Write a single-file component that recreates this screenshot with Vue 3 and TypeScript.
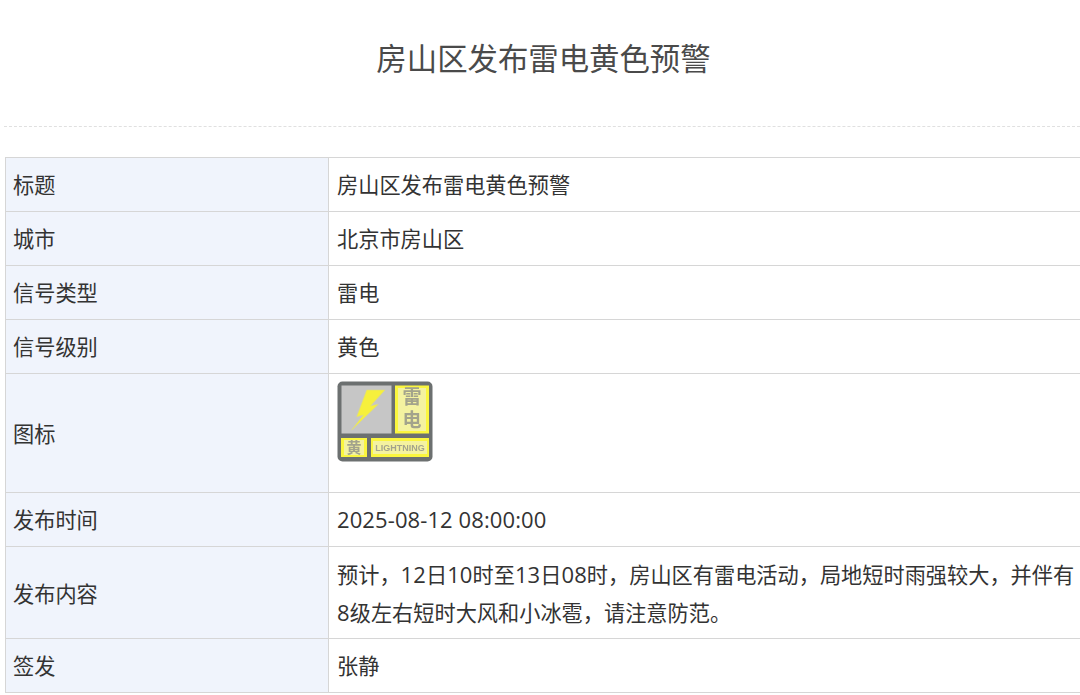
<script setup lang="ts">
interface Part { text: string; num: boolean }
interface Row { label: string; lines?: Part[][]; icon?: boolean; cls?: string }

function parts(text: string): Part[] {
  return text
    .split(/(\d[\d\-: ]*\d|\d)/)
    .filter((s) => s.length > 0)
    .map((s) => ({ text: s, num: /^\d/.test(s) }))
}

const rows: Row[] = [
  { label: '标题', lines: [parts('房山区发布雷电黄色预警')] },
  { label: '城市', lines: [parts('北京市房山区')] },
  { label: '信号类型', lines: [parts('雷电')] },
  { label: '信号级别', lines: [parts('黄色')] },
  { label: '图标', icon: true, cls: 'icon-row' },
  { label: '发布时间', lines: [parts('2025-08-12 08:00:00')] },
  {
    label: '发布内容',
    lines: [
      parts('预计，12日10时至13日08时，房山区有雷电活动，局地短时雨强较大，并伴有'),
      parts('8级左右短时大风和小冰雹，请注意防范。'),
    ],
    cls: 'text-row',
  },
  { label: '签发', lines: [parts('张静')] },
]
</script>

<template>
  <div class="page">
    <h1 class="title">房山区发布雷电黄色预警</h1>
    <div class="rule"></div>
    <table class="info">
      <tbody>
        <tr v-for="r in rows" :key="r.label" :class="r.cls">
          <th>{{ r.label }}</th>
          <td>
            <svg v-if="r.icon" class="signal" width="97" height="81" viewBox="0 0 97 81">
              <rect x="0.5" y="0.5" width="95" height="80" rx="5" fill="#6c7070" />
              <rect x="4.5" y="4.5" width="50" height="48" fill="#c6c6c6" />
              <polygon points="29.7,9 48,9 33.7,24.7 41.3,23.3 14.7,49 26.3,34 19.7,35.7" fill="#f6f03c" stroke="#dedb80" stroke-width="0.6" />
              <rect x="58" y="4.5" width="34" height="48" fill="#fbf63e" />
              <rect x="61" y="7" width="28" height="43" fill="#f4f2a0" />
              <text x="75" y="6" class="glyph-big">雷电</text>
              <rect x="4" y="57" width="26" height="19" fill="#fbf63e" />
              <rect x="7" y="59" width="20" height="15" fill="#f4f2a0" />
              <text x="17" y="71.5" class="glyph-small">黄</text>
              <rect x="34" y="57" width="58" height="19" fill="#fbf63e" />
              <rect x="36" y="60" width="54" height="13" fill="#f4f2a0" />
              <text x="63" y="70" class="glyph-latin">LIGHTNING</text>
            </svg>
            <template v-else>
              <div v-for="(l, i) in r.lines" :key="i"><span v-for="(p, j) in l" :key="j" :class="{ num: p.num }">{{ p.text }}</span></div>
            </template>
          </td>
        </tr>
      </tbody>
    </table>
  </div>
</template>

<style>
html, body { margin: 0; background: #fff; overflow: hidden; }
</style>

<style scoped>
.page {
  width: 1080px;
  height: 695px;
  overflow: hidden;
  padding-left: 4px;
  box-sizing: border-box;
  font-family: "Noto Sans CJK SC", "Noto Sans", sans-serif;
}
.title {
  margin: 0;
  height: 126px;
  box-sizing: border-box;
  padding-top: 34px;
  padding-left: 3px;
  text-align: center;
  font-size: 30.4px;
  line-height: 46px;
  font-weight: 400;
  color: #4a4a4a;
}
.rule {
  border-top: 1px dashed #e0e0e0;
  margin-bottom: 30px;
}
.info {
  width: 1200px;
  margin-left: 1px;
  table-layout: fixed;
  border-collapse: collapse;
  font-size: 21.2px;
  color: #333;
}
.info th, .info td {
  border: 1px solid #d6d6d6;
  height: 54px;
  padding: 0 8px 2px;
  box-sizing: border-box;
  text-align: left;
  font-weight: 400;
  line-height: 38px;
}
.info th { width: 323px; padding-left: 7px; background: #f0f4fc; }
.num { font-family: "Open Sans", sans-serif; font-size: 22px; letter-spacing: 0.1px; }
.icon-row th, .icon-row td { height: 119px; }
.icon-row th { padding-bottom: 0; }
.icon-row td { vertical-align: top; padding-top: 7px; }
.text-row th, .text-row td { height: 92px; padding-bottom: 0; }
.signal { display: block; filter: blur(0.6px); }
.glyph-big { font-size: 19px; font-weight: 700; fill: #a3a38c; writing-mode: vertical-rl; letter-spacing: 4px; }
.glyph-small { font-size: 15px; font-weight: 700; fill: #a3a38c; text-anchor: middle; }
.glyph-latin { font-family: "Liberation Sans", sans-serif; font-size: 9px; font-weight: 700; fill: #a3a38c; text-anchor: middle; }
</style>
